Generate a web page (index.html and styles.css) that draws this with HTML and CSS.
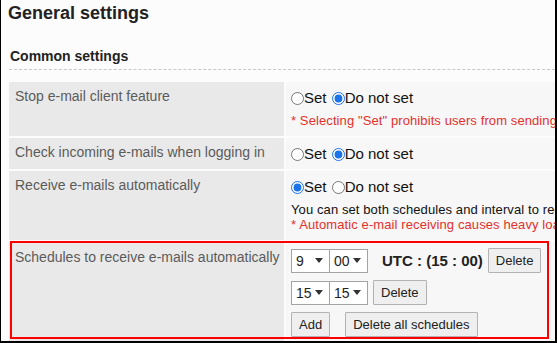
FILE: index.html
```html
<!DOCTYPE html>
<html lang="en">
<head>
    <meta charset="UTF-8">
    <meta name="viewport" content="width=device-width, initial-scale=1.0">
    <title>General settings</title>
    <link rel="stylesheet" href="styles.css">
</head>
<body>
    <div class="frame">
        <h1 class="page-title">General settings</h1>
        <h2 class="section-title">Common settings</h2>
        <div class="settings">
            <div class="row">
                <div class="label">Stop e-mail client feature</div>
                <div class="value">
                    <div class="choices">
                        <label><input type="radio" name="client">Set</label>
                        <label><input type="radio" name="client" checked>Do not set</label>
                    </div>
                    <div class="note">* Selecting "Set" prohibits users from sending and receiving e-mails.</div>
                </div>
            </div>
            <div class="row">
                <div class="label">Check incoming e-mails when logging in</div>
                <div class="value">
                    <div class="choices">
                        <label><input type="radio" name="login">Set</label>
                        <label><input type="radio" name="login" checked>Do not set</label>
                    </div>
                </div>
            </div>
            <div class="row">
                <div class="label">Receive e-mails automatically</div>
                <div class="value">
                    <div class="choices">
                        <label><input type="radio" name="auto" checked>Set</label>
                        <label><input type="radio" name="auto">Do not set</label>
                    </div>
                    <div class="desc">You can set both schedules and interval to receive e-mails automatically.</div>
                    <div class="note">* Automatic e-mail receiving causes heavy load on the server.</div>
                </div>
            </div>
            <div class="row row-marked">
                <div class="label">Schedules to receive e-mails automatically</div>
                <div class="value">
                    <div class="schedule">
                        <span class="select">9<i class="caret"></i></span><span class="select">00<i class="caret"></i></span>
                        <span class="utc">UTC : (15 : 00)</span>
                        <button type="button">Delete</button>
                    </div>
                    <div class="schedule">
                        <span class="select">15<i class="caret"></i></span><span class="select">15<i class="caret"></i></span>
                        <button type="button">Delete</button>
                    </div>
                    <div class="schedule">
                        <button type="button">Add</button>
                        <button type="button">Delete all schedules</button>
                    </div>
                </div>
                <span class="callout"></span>
            </div>
        </div>
    </div>
</body>
</html>
```

FILE: styles.css
```css
* {
    margin: 0;
    padding: 0;
    box-sizing: border-box;
    font-family: "Liberation Sans", Arial, sans-serif;
}
body {
    background-color: #fff;
    overflow: hidden;
}
.frame {
    width: 557px;
    height: 343px;
    background: #fcfcfc;
    border-left: 1px solid #000;
    border-right: 2px solid #000;
    border-bottom: 2px solid #000;
    overflow: hidden;
}
.page-title {
    font-size: 18px;
    line-height: 22px;
    font-weight: bold;
    color: #222;
    padding: 2px 0 0 7px;
}
.section-title {
    font-size: 14px;
    line-height: 18px;
    font-weight: bold;
    color: #222;
    margin: 23px 0 0 8px;
    padding: 0 0 4px 1px;
    border-bottom: 1px dashed #c8c8c8;
}
.settings {
    width: 760px;
    margin: 12px 0 0 8px;
}
.row {
    display: grid;
    grid-template-columns: 275px 1fr;
    gap: 2px;
    margin-bottom: 2px;
}
.label {
    background: #e9e9e9;
    color: #5b5b5b;
    font-size: 14px;
    line-height: 16px;
    padding: 6px 2px 6px 6px;
    white-space: nowrap;
}
.value {
    background: #f7f7f7;
    padding: 6px 5px 5px;
    white-space: nowrap;
}
.choices {
    font-size: 15px;
    line-height: 20px;
    color: #111;
}
.choices label + label {
    margin-left: 1px;
}
.choices input {
    width: 13px;
    height: 13px;
    margin: 0;
    vertical-align: -2px;
    accent-color: #1a73e8;
}
.desc, .note {
    font-size: 13px;
    line-height: 15px;
    letter-spacing: 0.1px;
}
.desc {
    color: #111;
    margin-top: 5px;
}
.note {
    color: #e4312b;
    margin: 5px 0 3px;
}
.desc + .note {
    margin-top: 0;
}
.row-marked {
    position: relative;
}
.row-marked .label {
    padding-top: 7px;
}
.callout {
    position: absolute;
    left: 1px;
    top: -1px;
    width: 539px;
    height: 98px;
    border: 2px solid #f00;
}
.schedule {
    display: flex;
    align-items: center;
    height: 25px;
    margin-bottom: 7px;
}
.select {
    display: inline-flex;
    align-items: center;
    justify-content: space-between;
    width: 39px;
    height: 24px;
    padding: 0 6px 0 4px;
    background: #fff;
    border: 1px solid #a3a3a3;
    font-size: 14px;
    color: #222;
}
.select + .select {
    margin-left: -1px;
}
.caret {
    width: 0;
    height: 0;
    border-left: 4px solid transparent;
    border-right: 4px solid transparent;
    border-top: 5px solid #333;
}
.utc {
    font-size: 15px;
    font-weight: bold;
    color: #222;
    margin: 0 5px 0 14px;
}
.schedule button {
    height: 25px;
    padding: 0 7px;
    background: #efefef;
    border: 1px solid #b3b3b3;
    border-radius: 1px;
    font-size: 13px;
    color: #222;
}
.schedule .select + button {
    margin-left: 5px;
}
.schedule button + button {
    margin-left: 15px;
}
```
